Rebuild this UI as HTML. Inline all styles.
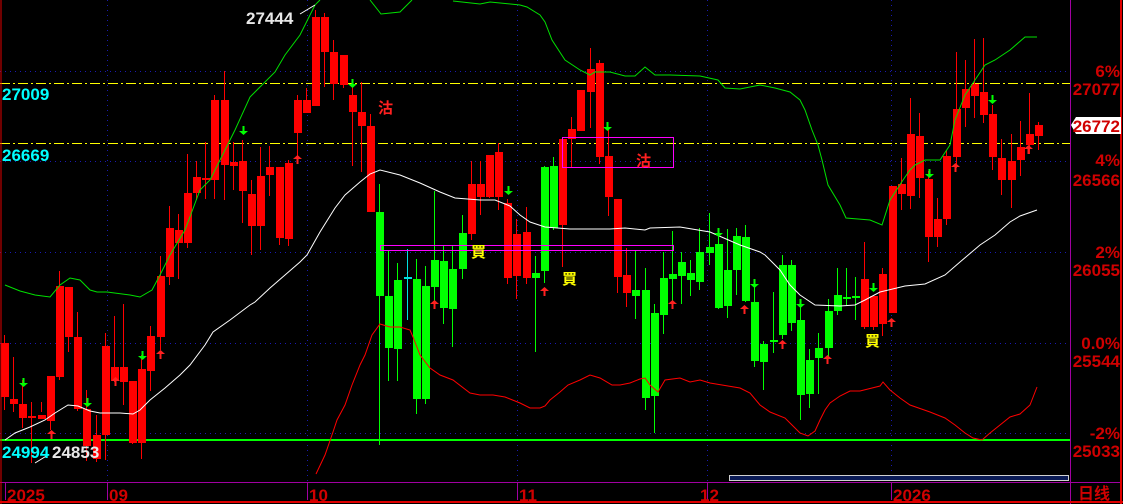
<!DOCTYPE html>
<html><head><meta charset="utf-8"><style>
html,body{margin:0;padding:0;background:#000;}
svg{display:block}
text{font-family:"Liberation Sans","Noto Sans CJK SC",sans-serif;font-weight:bold}
</style></head><body>
<svg id="s" width="1123" height="504" xmlns="http://www.w3.org/2000/svg">
<rect width="1123" height="504" fill="#000"/>
<g stroke="#1a1ab0" stroke-width="1" stroke-dasharray="1,4">
<line x1="0" y1="71.5" x2="1070" y2="71.5"/><line x1="0" y1="161.5" x2="1070" y2="161.5"/>
<line x1="0" y1="252.5" x2="1070" y2="252.5"/><line x1="0" y1="343.5" x2="1070" y2="343.5"/>
<line x1="0" y1="433.5" x2="1070" y2="433.5"/>
<line x1="107.5" y1="0" x2="107.5" y2="482"/><line x1="307.5" y1="0" x2="307.5" y2="482"/>
<line x1="517.5" y1="0" x2="517.5" y2="482"/><line x1="707.5" y1="0" x2="707.5" y2="482"/>
<line x1="891.5" y1="0" x2="891.5" y2="482"/>
</g>
<g stroke="#ffff00" stroke-width="1" stroke-dasharray="10,3,2,3">
<line x1="0" y1="83.5" x2="1070" y2="83.5"/><line x1="0" y1="143.5" x2="1070" y2="143.5"/>
</g>
<line x1="0" y1="440" x2="1070" y2="440" stroke="#00ff00" stroke-width="2"/>
<g id="c"></g>
<polyline fill="none" stroke="#00e000" stroke-width="1" points="5,285 20,291 35,295 50,297 60,285 70,278 80,280 90,290 97,292 107,292 130,295 140,297 152,290 160,275 170,255 185,230 200,190 210,180 220,160 235,130 250,97 262,85 275,72 285,55 300,35 315,5 320,0"/>
<polyline fill="none" stroke="#00e000" stroke-width="1" points="370,0 381,14 400,12 412,0"/>
<polyline fill="none" stroke="#00e000" stroke-width="1" points="453,1 480,4 490,2 520,5 527,7 540,15 545,22 552,40 565,60 580,70 590,75 595,72 610,72 625,76 635,76 645,67 655,75 670,75 700,76 718,80 725,88 740,89 760,85 775,88 790,92 800,100 805,110 812,130 818,145 822,160 828,185 840,205 846,218 870,220 882,225 890,200 903,180 910,170 915,165 925,160 940,160 950,145 955,120 965,95 975,80 985,65 995,60 1010,50 1025,37 1037,37"/>
<polyline fill="none" stroke="#ffffff" stroke-width="1" points="5,440 15,433 30,427 45,420 55,413 68,405 78,406 90,411 100,413 120,413 133,414 140,410 150,400 165,388 180,375 190,365 205,345 213,332 230,320 250,305 255,302 270,288 285,275 300,262 307,255 320,232 335,208 345,195 360,182 370,174 380,170 400,175 420,183 440,192 455,198 480,200 495,200 510,206 520,215 530,222 545,227 570,229 610,229 625,228 645,230 650,228 680,227 710,232 740,245 760,252 765,255 780,270 790,285 800,295 815,305 840,306 855,305 865,300 880,292 905,286 925,284 945,275 960,262 980,245 995,235 1010,222 1020,216 1037,210"/>
<polyline fill="none" stroke="#ff0000" stroke-width="1" points="316,474 325,455 333,432 337,420 345,405 352,385 360,365 365,355 372,335 380,324 390,327 400,327 410,330 413,337 420,355 430,368 440,375 453,380 470,393 480,395 493,395 505,397 520,403 530,408 540,408 545,406 550,400 560,392 568,385 580,380 590,375 600,378 612,385 620,385 630,383 640,379 645,378 650,385 658,392 665,380 680,378 690,382 700,380 710,383 740,388 750,393 760,405 770,412 785,418 792,425 800,433 808,436 815,431 820,420 825,410 830,403 840,396 850,391 860,391 880,386 883,382 890,390 900,398 910,405 930,412 945,418 955,425 965,433 973,438 982,440 990,433 1000,425 1010,417 1020,414 1030,405 1037,387"/>
<rect x="562.5" y="137.5" width="111" height="30" fill="none" stroke="#ff00ff" stroke-width="1"/>
<rect x="380.5" y="245.5" width="293" height="5" fill="none" stroke="#ff00ff" stroke-width="1"/>
<g id="a"></g>
<line x1="35" y1="463" x2="48" y2="455" stroke="#fff"/>
<line x1="300" y1="14" x2="315" y2="5" stroke="#fff"/>
<text x="246" y="24" fill="#e8e8e8" font-size="17">27444</text>
<text x="2" y="100" fill="#00ffff" font-size="17">27009</text>
<text x="2" y="161" fill="#00ffff" font-size="17">26669</text>
<text x="2" y="458" fill="#00ffff" font-size="17">24994</text>
<text x="52" y="458" fill="#e8e8e8" font-size="17">24853</text>
<g font-size="15" fill="#ff2020"><text x="378" y="113">沽</text><text x="636" y="166">沽</text></g>
<g font-size="15" fill="#ffff00"><text x="471" y="257">買</text><text x="562" y="284">買</text><text x="865" y="346">買</text></g>
<rect x="729.5" y="475.5" width="339" height="5" fill="#0a1a55" stroke="#d0d0d0" stroke-width="1"/>
<line x1="1070.5" y1="0" x2="1070.5" y2="504" stroke="#a000a0"/>
<line x1="0" y1="482.5" x2="1121" y2="482.5" stroke="#a000a0"/>
<line x1="0" y1="502" x2="1123" y2="502" stroke="#e00000" stroke-width="2"/>
<line x1="1121" y1="0" x2="1121" y2="504" stroke="#e00000" stroke-width="2"/>
<line x1="1" y1="0" x2="1" y2="504" stroke="#e00000" stroke-width="1"/>
<g stroke="#a000a0"><line x1="5.5" y1="482" x2="5.5" y2="500"/><line x1="107.5" y1="482" x2="107.5" y2="500"/><line x1="307.5" y1="482" x2="307.5" y2="500"/><line x1="517.5" y1="482" x2="517.5" y2="500"/><line x1="707.5" y1="482" x2="707.5" y2="500"/><line x1="891.5" y1="482" x2="891.5" y2="500"/></g>
<g font-size="17" fill="#d00000">
<text x="7" y="501">2025</text><text x="109" y="501">09</text><text x="309" y="501">10</text><text x="519" y="501">11</text><text x="700" y="501">12</text><text x="893" y="501">2026</text>
</g>
<g font-size="17" fill="#d00000" text-anchor="end">
<text x="1120" y="77">6%</text><text x="1120" y="95">27077</text>
<text x="1120" y="166">4%</text><text x="1120" y="186">26566</text>
<text x="1120" y="258">2%</text><text x="1120" y="276">26055</text>
<text x="1120" y="349">0.0%</text><text x="1120" y="367">25544</text>
<text x="1120" y="439">-2%</text><text x="1120" y="457">25033</text>
</g>
<polygon points="1071,125 1076,117 1121,117 1121,134 1076,134" fill="#fff"/>
<text x="1120" y="132" font-size="17" fill="#d00000" text-anchor="end">26772</text>
<text x="1078" y="499" font-size="16" fill="#d00000" font-weight="normal">日线</text>
<g stroke="#ffff00"><line x1="1062" y1="83.5" x2="1070" y2="83.5"/><line x1="1062" y1="143.5" x2="1070" y2="143.5"/></g>
</svg>
<script>
var D=[
[1,343,397,335,410],[1,399,404,357,412],[1,404,418,380,428],[1,416,418,402,463],[1,415,419,402,412],[1,376,421,376,430],[1,286,377,271,380],[1,287,337,287,352],[1,337,409,312,411],[1,409,446,390,461],[1,435,459,415,462],[1,346,435,333,460],[1,367,381,316,382],[1,367,382,304,405],[1,381,443,381,444],[1,369,443,355,459],[1,336,371,326,391],[1,276,337,256,350],[1,228,277,206,285],[1,230,243,214,279],[1,193,243,154,248],[1,177,193,161,200],[1,178,180,142,199],[1,100,180,95,199],[1,100,165,71,200],[1,162,166,142,190],[1,161,191,140,223],[1,194,226,180,255],[1,176,226,147,250],[1,167,175,146,196],[1,167,238,167,245],[1,163,239,160,246],[1,100,133,95,162],[1,100,113,88,113],[1,17,106,10,106],[1,17,52,13,87],[1,52,84,40,100],[1,55,85,55,88],[1,95,112,82,166],[1,112,126,82,172],
[1,126,212,114,212],[0,212,296,184,445],[0,296,348,251,381],[0,280,349,263,381],[2,277,279,249,320],[0,279,399,259,414],[0,286,399,266,404],[0,260,287,191,305],[0,261,308,246,324],[0,269,309,246,347],[0,233,269,215,279],[1,184,234,161,240],[1,184,197,161,215],[1,155,197,155,198],[1,152,197,143,210],[1,203,278,199,284],[1,234,276,219,299],[1,232,278,207,284],[0,273,278,256,352],[0,167,271,166,283],[0,166,228,157,230],[1,139,225,139,267],[1,129,139,117,167],[1,90,131,90,131],[1,69,92,48,128],[1,63,157,60,164],[1,156,197,127,216],[1,199,277,199,293],[1,275,293,248,307],[0,290,296,251,319],[0,290,398,268,410],[0,313,396,304,433],[0,278,315,252,334],[0,274,279,231,305],[0,262,276,252,304],[0,273,280,260,296],[0,252,282,228,290],[0,247,253,213,265],[0,244,308,230,309],
[0,270,306,229,318],[0,236,270,228,295],[0,237,301,225,302],[0,302,361,282,367],[0,344,362,341,390],[0,340,342,292,353],[0,265,335,255,339],[0,265,323,260,331],[0,320,395,302,420],[0,360,394,349,408],[0,348,358,333,394],[0,311,348,299,358],[0,295,311,268,315],[0,297,299,268,305],[0,296,298,277,320],[1,279,327,242,329],[1,296,327,296,330],[1,274,324,268,336],[1,186,313,186,313],[1,184,194,158,210],[1,134,196,98,209],[1,136,178,113,198],[1,179,237,171,262],[1,219,237,198,247],[1,156,219,150,225],[1,109,157,52,168],[1,89,108,60,127],[1,84,96,39,118],[1,92,115,38,123],[1,114,157,105,170],[1,158,180,139,195],[1,161,180,134,208],[1,147,160,121,176],[1,134,145,93,154],[1,125,136,122,150]];
var g=document.getElementById('c'),h='';
for(var i=0;i<D.length;i++){var d=D[i],x=Math.round(4+i*9.15),col=d[0]==1?'#ff0000':(d[0]==0?'#00ff00':'#00e0e0');
h+='<line x1="'+(x+0.5)+'" y1="'+d[3]+'" x2="'+(x+0.5)+'" y2="'+d[4]+'" stroke="'+col+'"/>';
h+='<rect x="'+(x-3)+'" y="'+d[1]+'" width="8" height="'+Math.max(1,d[2]-d[1])+'" fill="'+col+'"/>';}
g.innerHTML=h;
var dn=[[23,387],[87,407],[142,360],[243,135],[352,88],[508,195],[607,131],[718,237],[754,288],[800,308],[873,292],[929,178],[992,104]];
var up=[[51,430],[115,377],[160,350],[297,155],[434,300],[544,287],[672,300],[744,305],[782,340],[827,355],[891,318],[955,163],[1028,145]];
var a='';
dn.forEach(function(p){var x=p[0],y=p[1];a+='<path d="M'+(x-4)+' '+(y-4)+'L'+(x+5)+' '+(y-4)+'L'+(x+0.5)+' '+y+'Z M'+(x-0.5)+' '+(y-9)+'h2v5h-2z" fill="#00ff00"/>';});
up.forEach(function(p){var x=p[0],y=p[1];a+='<path d="M'+(x-4)+' '+(y+4)+'L'+(x+5)+' '+(y+4)+'L'+(x+0.5)+' '+y+'Z M'+(x-0.5)+' '+(y+4)+'h2v5h-2z" fill="#ff2020"/>';});
document.getElementById('a').innerHTML=a;
</script>
</body></html>
